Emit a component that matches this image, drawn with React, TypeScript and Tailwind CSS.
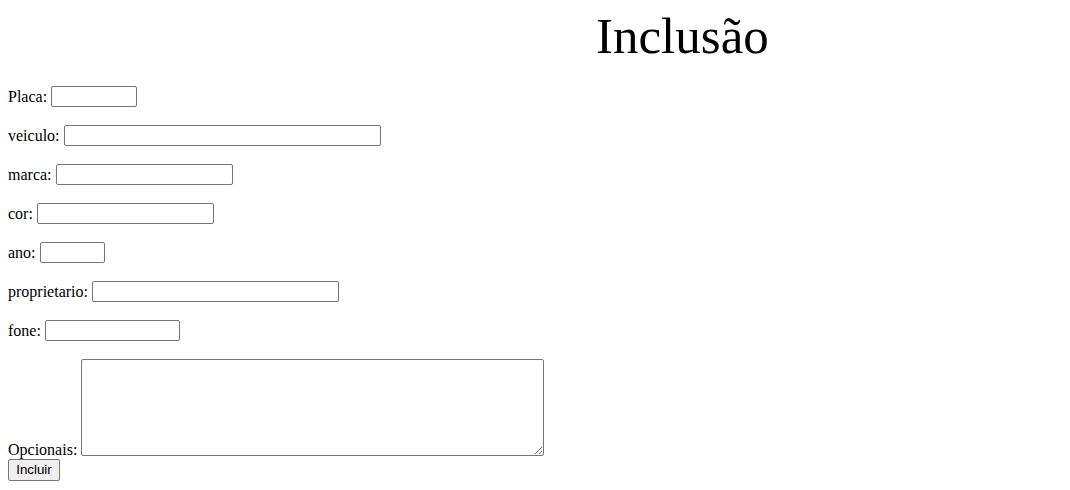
const fields = [
  { label: 'Placa:', width: 'w-[86px]' },
  { label: 'veiculo:', width: 'w-[317px]' },
  { label: 'marca:', width: 'w-[177px]' },
  { label: 'cor:', width: 'w-[177px]' },
  { label: 'ano:', width: 'w-[65px]' },
  { label: 'proprietario:', width: 'w-[247px]' },
  { label: 'fone:', width: 'w-[135px]' },
]

export default function App() {
  return (
    <div className="min-h-screen bg-white px-2 font-['Liberation_Serif',serif] text-black text-[16px]">
      {/* Title */}
      <h1 className="pt-[11px] pl-[588px] text-[51px] leading-[51px] font-normal whitespace-nowrap">
        Inclusão
      </h1>

      {/* Form */}
      <form className="mt-[24px] flex flex-col gap-[18px]" onSubmit={(e) => e.preventDefault()}>
        {fields.map((f) => (
          <div key={f.label} className="flex h-[21px] items-center gap-1">
            <label className="leading-[18px] whitespace-nowrap">{f.label}</label>
            <input
              type="text"
              className={`${f.width} h-[21px] rounded-[2px] border border-[#767676] bg-white px-[2px] text-[13.33px] outline-none`}
            />
          </div>
        ))}

        <div className="flex flex-col">
          <div className="flex h-[97px] items-end gap-1">
            <label className="mb-[-3px] leading-[18px] whitespace-nowrap">Opcionais:</label>
            <textarea className="h-[97px] w-[463px] resize rounded-[2px] border border-[#767676] bg-white px-[2px] text-[13.33px] outline-none" />
          </div>
          <div className="mt-[3px] flex">
            <button
              type="submit"
              className="h-[22px] w-[52px] rounded-[2px] border border-[#767676] bg-[#efefef] font-['Liberation_Sans',Arial,sans-serif] text-[13.33px] leading-none text-black"
            >
              Incluir
            </button>
          </div>
        </div>
      </form>
    </div>
  )
}
